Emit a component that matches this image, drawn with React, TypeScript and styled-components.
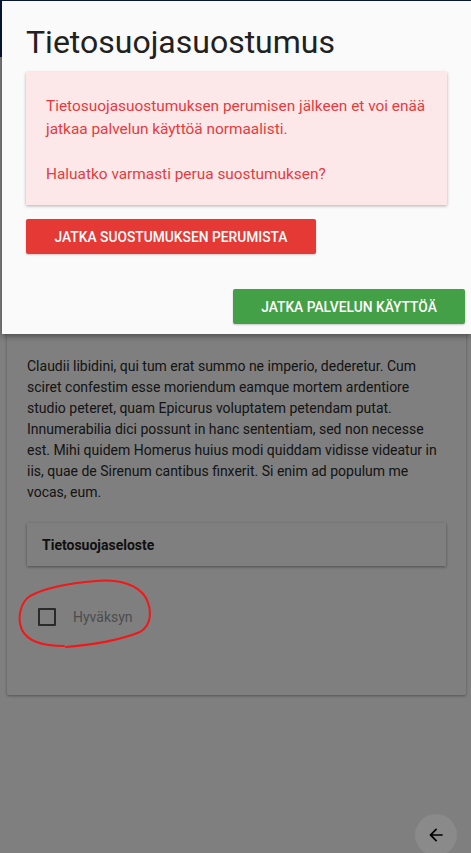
import React from "react";
import styled, { createGlobalStyle } from "styled-components";

const Global = createGlobalStyle`
  html, body { margin: 0; padding: 0; background: #fff; }
  body { font-family: Roboto, "Noto Sans", sans-serif; width: 471px; height: 853px; overflow: hidden; }
  * { box-sizing: border-box; }
`;

const Page = styled.div`
  position: relative;
  width: 471px;
  height: 853px;
  background: #fefefe;
  display: flex;
  flex-direction: column;
`;

const Header = styled.header`
  height: 57px;
  background: #14306e;
  flex-shrink: 0;
`;

const Card = styled.section`
  margin: 10px 5px 0 7px;
  background: #fff;
  border-radius: 2px;
  box-shadow: 0 1px 3px rgba(0, 0, 0, 0.35);
  padding: 0 20px 0 20px;
  height: 628px;
  display: flex;
  flex-direction: column;
`;

const Hidden = styled.div`
  height: 289px;
  flex-shrink: 0;
`;

const Paragraph = styled.p`
  margin: 0;
  font-size: 14px;
  line-height: 21px;
  color: #2a2a2a;
`;

const Notice = styled.div`
  margin-top: 20px;
  height: 43px;
  display: flex;
  align-items: center;
  padding: 0 15px;
  font-weight: 700;
  font-size: 14px;
  color: #222;
  background: #fff;
  box-shadow: 0 1px 3px rgba(0, 0, 0, 0.4);
`;

const CheckRow = styled.label`
  margin-top: 42px;
  display: flex;
  align-items: center;
  gap: 17px;
  padding-left: 11px;
`;

const Box = styled.span`
  width: 18px;
  height: 18px;
  border: 2px solid #555;
  border-radius: 1px;
`;

const CheckLabel = styled.span`
  font-size: 14px;
  color: #9a9a9a;
`;

const Overlay = styled.div`
  position: absolute;
  inset: 0;
  background: rgba(0, 0, 0, 0.5);
`;

const Dialog = styled.div`
  position: absolute;
  top: 1px;
  left: 2px;
  right: 0;
  height: 333px;
  background: #fafafa;
  box-shadow: 0 2px 6px rgba(0, 0, 0, 0.4);
  padding: 23px 24px 0 24px;
  display: flex;
  flex-direction: column;
`;

const Title = styled.h1`
  margin: 0;
  font-weight: 400;
  font-size: 32px;
  line-height: 36px;
  color: #212121;
`;

const Alert = styled.div`
  margin-top: 12px;
  width: 421px;
  background: #fde8e9;
  box-shadow: 0 1px 3px rgba(0, 0, 0, 0.3);
  padding: 23px 20px 20px 20px;
  color: #e53b3f;
  font-size: 15.4px;
  line-height: 22.5px;
`;

const AlertLine = styled.p`
  margin: 0;
  & + & { margin-top: 22.5px; }
`;

const Button = styled.button<{ $tone: "red" | "green" }>`
  height: 35px;
  border: none;
  border-radius: 2px;
  font-family: Roboto, sans-serif;
  font-weight: 500;
  font-size: 13.8px;
  color: #fff;
  white-space: nowrap;
  text-transform: uppercase;
  background: ${(p) => (p.$tone === "red" ? "#e53935" : "#43a047")};
  box-shadow: 0 1px 2px rgba(0, 0, 0, 0.2);
  padding: 0;
`;

const RedButton = styled(Button)`
  margin-top: 14px;
  width: 290px;
  align-self: flex-start;
`;

const Actions = styled.div`
  margin-top: 35px;
  display: flex;
  justify-content: flex-end;
  margin-right: -18px;
`;

const GreenButton = styled(Button)`
  width: 232px;
`;

const Fab = styled.button`
  position: absolute;
  left: 415px;
  top: 814px;
  width: 42px;
  height: 42px;
  border-radius: 50%;
  border: none;
  background: #8a8a8a;
  display: flex;
  align-items: center;
  justify-content: center;
  padding: 0;
`;

const Annotation = styled.svg`
  position: absolute;
  left: 0;
  top: 570px;
  pointer-events: none;
`;

export default function App() {
  return (
    <>
      <Global />
      <Page>
        <Header />
        <Card>
          <Hidden />
          <Paragraph>
            Claudii libidini, qui tum erat summo ne imperio, dederetur. Cum sciret confestim esse moriendum eamque mortem ardentiore studio peteret, quam Epicurus voluptatem petendam putat. Innumerabilia dici possunt in hanc sententiam, sed non necesse est. Mihi quidem Homerus huius modi quiddam vidisse videatur in iis, quae de Sirenum cantibus finxerit. Si enim ad populum me vocas, eum.
          </Paragraph>
          <Notice>Tietosuojaseloste</Notice>
          <CheckRow>
            <Box />
            <CheckLabel>Hyväksyn</CheckLabel>
          </CheckRow>
        </Card>
        <Overlay />
        <Annotation width="160" height="85" viewBox="0 0 160 85">
          <path
            d="M66 77 C 90 75, 120 70, 140 62 C 152 55, 152 40, 146 28 C 138 14, 118 9, 96 11 C 70 13, 45 18, 30 26 C 20 33, 17 48, 22 60 C 28 72, 45 76, 64 76"
            fill="none"
            stroke="#f01818"
            strokeWidth="2"
            strokeLinecap="round"
          />
        </Annotation>
        <Fab aria-label="Takaisin">
          <svg width="20" height="20" viewBox="0 0 24 24">
            <path d="M20 11H7.83l5.59-5.59L12 4l-8 8 8 8 1.41-1.41L7.83 13H20v-2z" fill="#000" />
          </svg>
        </Fab>
        <Dialog>
          <Title>Tietosuojasuostumus</Title>
          <Alert>
            <AlertLine>Tietosuojasuostumuksen perumisen jälkeen et voi enää jatkaa palvelun käyttöä normaalisti.</AlertLine>
            <AlertLine>Haluatko varmasti perua suostumuksen?</AlertLine>
          </Alert>
          <RedButton $tone="red">Jatka suostumuksen perumista</RedButton>
          <Actions>
            <GreenButton $tone="green">Jatka palvelun käyttöä</GreenButton>
          </Actions>
        </Dialog>
      </Page>
    </>
  );
}
